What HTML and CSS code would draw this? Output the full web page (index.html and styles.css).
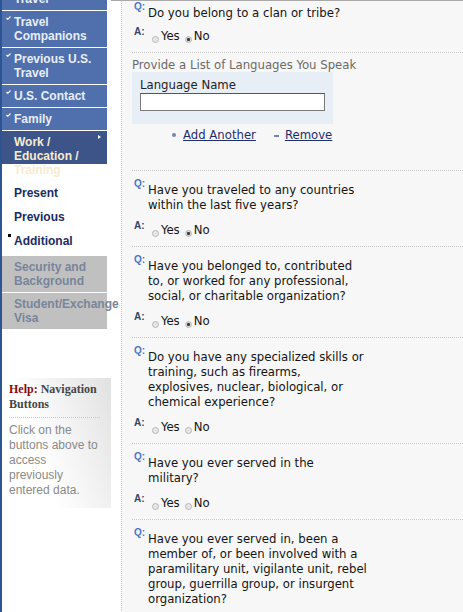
FILE: index.html
```html
<!DOCTYPE html>
<html lang="en">
<head>
<meta charset="utf-8">
<title>Work / Education / Training - Additional</title>
<link rel="stylesheet" href="styles.css">
</head>
<body>
<div class="page">
  <nav class="side">
    <div class="menu">
      <div class="btn done"><span class="chk"><svg width="5" height="4" viewBox="0 0 5 4"><path d="M0.5 2 L1.8 3.3 L4.5 0.5" fill="none" stroke="#fff" stroke-width="1.1"/></svg></span><span class="lbl">Travel</span></div>
      <div class="btn done"><span class="chk"><svg width="5" height="4" viewBox="0 0 5 4"><path d="M0.5 2 L1.8 3.3 L4.5 0.5" fill="none" stroke="#fff" stroke-width="1.1"/></svg></span><span class="lbl">Travel<br>Companions</span></div>
      <div class="btn done"><span class="chk"><svg width="5" height="4" viewBox="0 0 5 4"><path d="M0.5 2 L1.8 3.3 L4.5 0.5" fill="none" stroke="#fff" stroke-width="1.1"/></svg></span><span class="lbl">Previous U.S.<br>Travel</span></div>
      <div class="btn done"><span class="chk"><svg width="5" height="4" viewBox="0 0 5 4"><path d="M0.5 2 L1.8 3.3 L4.5 0.5" fill="none" stroke="#fff" stroke-width="1.1"/></svg></span><span class="lbl">U.S. Contact</span></div>
      <div class="btn done"><span class="chk"><svg width="5" height="4" viewBox="0 0 5 4"><path d="M0.5 2 L1.8 3.3 L4.5 0.5" fill="none" stroke="#fff" stroke-width="1.1"/></svg></span><span class="lbl">Family</span></div>
      <div class="btn current"><span class="chk"></span><span class="lbl">Work /<br>Education /<br>Training</span><span class="arrow"></span></div>
      <ul class="sub">
        <li>Present</li>
        <li>Previous</li>
        <li class="active">Additional</li>
      </ul>
      <div class="btn off"><span class="lbl">Security and<br>Background</span></div>
      <div class="btn off"><span class="lbl">Student/Exchange<br>Visa</span></div>
      <div class="help">
        <h4><span class="help-key">Help:</span> Navigation Buttons</h4>
        <p>Click on the buttons above to access previously entered data.</p>
      </div>
    </div>
    <div class="gutter"></div>
  </nav>

  <main class="main">
    <section class="qa first">
      <div class="q"><span class="ql">Q:</span><span class="qt">Do you belong to a clan or tribe?</span></div>
      <div class="a"><span class="al">A:</span><span class="radio"></span><span class="opt">Yes</span><span class="radio on second"></span><span class="opt">No</span></div>
    </section>

    <section class="lang">
      <div class="lang-title">Provide a List of Languages You Speak</div>
      <div class="langbox">
        <label>Language Name</label>
        <div class="input"></div>
      </div>
      <div class="links">
        <span class="dot"></span><a href="#">Add Another</a>
        <span class="dash"></span><a href="#">Remove</a>
      </div>
    </section>

    <section class="qa">
      <div class="q"><span class="ql">Q:</span><span class="qt">Have you traveled to any countries<br>within the last five years?</span></div>
      <div class="a"><span class="al">A:</span><span class="radio"></span><span class="opt">Yes</span><span class="radio on second"></span><span class="opt">No</span></div>
    </section>

    <section class="qa">
      <div class="q"><span class="ql">Q:</span><span class="qt">Have you belonged to, contributed<br>to, or worked for any professional,<br>social, or charitable organization?</span></div>
      <div class="a"><span class="al">A:</span><span class="radio"></span><span class="opt">Yes</span><span class="radio on second"></span><span class="opt">No</span></div>
    </section>

    <section class="qa">
      <div class="q"><span class="ql">Q:</span><span class="qt">Do you have any specialized skills or<br>training, such as firearms,<br>explosives, nuclear, biological, or<br>chemical experience?</span></div>
      <div class="a"><span class="al">A:</span><span class="radio"></span><span class="opt">Yes</span><span class="radio second"></span><span class="opt">No</span></div>
    </section>

    <section class="qa">
      <div class="q"><span class="ql">Q:</span><span class="qt">Have you ever served in the<br>military?</span></div>
      <div class="a"><span class="al">A:</span><span class="radio"></span><span class="opt">Yes</span><span class="radio second"></span><span class="opt">No</span></div>
    </section>

    <section class="qa">
      <div class="q"><span class="ql">Q:</span><span class="qt">Have you ever served in, been a<br>member of, or been involved with a<br>paramilitary unit, vigilante unit, rebel<br>group, guerrilla group, or insurgent<br>organization?</span></div>
      <div class="a"><span class="al">A:</span><span class="radio"></span><span class="opt">Yes</span><span class="radio second"></span><span class="opt">No</span></div>
    </section>
  </main>
</div>
</body>
</html>
```

FILE: styles.css
```css
html, body {
  margin: 0;
  height: 100%;
  overflow: hidden;
}
body {
  background: #f7f7f7;
  font-family: "Liberation Sans", Arial, sans-serif;
}
.page {
  display: flex;
  align-items: stretch;
  min-height: 100%;
}

/* ---------- side navigation ---------- */
.side {
  display: flex;
  flex: none;
  border-left: 2px solid #2d5593;
  background: #fff;
}
.menu {
  width: 109px;
  margin-top: -12px;
}
.gutter {
  width: 10px;
  border-top: 1px solid #a9a9a9;
}
.btn {
  width: 105px;
  box-sizing: border-box;
  display: flex;
  align-items: flex-start;
  padding: 4px 0 4px 2px;
  margin-bottom: 1px;
  background: #4f70ad;
  color: #e8eef8;
  font-weight: bold;
  font-size: 12px;
  line-height: 14px;
  white-space: nowrap;
}
.chk {
  width: 10px;
  height: 14px;
  flex: none;
}
.chk svg {
  display: block;
  margin: 1px 0 0 2px;
}
.btn.current {
  background: #3c5488;
  color: #f8ebcf;
  height: 33px;
}
.arrow {
  margin-left: auto;
  margin-right: 6px;
  width: 0;
  height: 0;
  border-left: 3px solid #fff;
  border-top: 2.5px solid transparent;
  border-bottom: 2.5px solid transparent;
}
.btn.off {
  background: #c0c0c0;
  color: #78859a;
  padding-left: 12px;
}
.sub {
  list-style: none;
  margin: 0;
  padding: 16px 0 3px;
}
.sub li {
  display: flex;
  align-items: flex-start;
  padding-left: 12px;
  line-height: 24px;
  font-size: 12px;
  font-weight: bold;
  color: #1b2b5f;
}
.sub li.active::before {
  content: "";
  flex: none;
  width: 3px;
  height: 3px;
  background: #000;
  margin: 5px 3px 0 -6px;
}
.help {
  margin-top: 49px;
  width: 109px;
  height: 130px;
  box-sizing: border-box;
  padding: 4px 11px 0 7px;
  background: linear-gradient(250deg, #e1e1e1 0%, #f2f2f2 35%, #ffffff 65%);
}
.help h4 {
  margin: 0;
  padding-bottom: 5px;
  border-bottom: 1px dotted #c8c8c8;
  font: bold 12px/15px "Liberation Serif", "Times New Roman", serif;
  color: #454545;
}
.help-key {
  color: #8b0a0a;
}
.help p {
  margin: 0;
  padding-top: 5px;
  font-size: 12px;
  line-height: 15px;
  color: #8a8a8a;
}

/* ---------- main form ---------- */
.main {
  flex: 1;
  min-width: 0;
  border-left: 1px dotted #d4c4ae;
  border-top: 1px solid #a9a9a9;
  padding-left: 10px;
  font-family: "DejaVu Sans Condensed", "DejaVu Sans", sans-serif;
  font-stretch: condensed;
  font-size: 13px;
  color: #141414;
  white-space: nowrap;
}
.qa {
  padding: 11px 0 7.5px;
  border-top: 1px dotted #c8c8c8;
}
.qa.first {
  border-top: 0;
  padding-top: 3.5px;
}
.q {
  display: flex;
  align-items: flex-start;
  line-height: 15px;
}
.ql, .al {
  flex: none;
  width: 14px;
  margin-left: 2px;
  font: bold 10px/10px "Liberation Sans", Arial, sans-serif;
}
.ql {
  color: #4a76c9;
  margin-top: -3px;
}
.a {
  display: flex;
  align-items: flex-start;
  margin-top: 10.5px;
  line-height: 16px;
}
.first .a {
  margin-top: 8.5px;
}
.al {
  width: 16px;
  color: #34456b;
  margin-top: -1px;
}
.radio {
  flex: none;
  width: 7px;
  height: 7px;
  box-sizing: border-box;
  border-radius: 50%;
  border: 1px solid #b8b8b8;
  background: #e6e6e6;
  margin: 7.5px 0 0 2px;
}
.radio.second {
  margin-left: 5px;
}
.radio.on {
  background: radial-gradient(circle, #3c3c3c 0 1.3px, #dcdcdc 1.8px);
}
.opt {
  margin-left: 2px;
}

.lang {
  padding: 5px 0 28px;
  border-top: 1px dotted #c8c8c8;
}
.lang-title {
  line-height: 14px;
  color: #6a6a6a;
}
.langbox {
  width: 201px;
  box-sizing: border-box;
  background: #e8eef6;
  padding: 6px 8px 13px;
}
.langbox label {
  display: block;
  line-height: 14px;
  color: #222;
}
.input {
  width: 185px;
  height: 18px;
  box-sizing: border-box;
  margin-top: 1px;
  border: 1px solid #7a7a7a;
  border-top-color: #555;
  background: #fff;
}
.links {
  display: flex;
  align-items: center;
  margin: 4px 0 0 40px;
  line-height: 14px;
}
.links a {
  color: #1f2d6b;
  text-decoration: underline;
}
.dot {
  flex: none;
  width: 4px;
  height: 4px;
  border-radius: 50%;
  background: #7086b5;
  margin-right: 7px;
}
.dash {
  flex: none;
  width: 5px;
  height: 2px;
  background: #7086b5;
  margin: 2px 6px 0 18px;
}
```
